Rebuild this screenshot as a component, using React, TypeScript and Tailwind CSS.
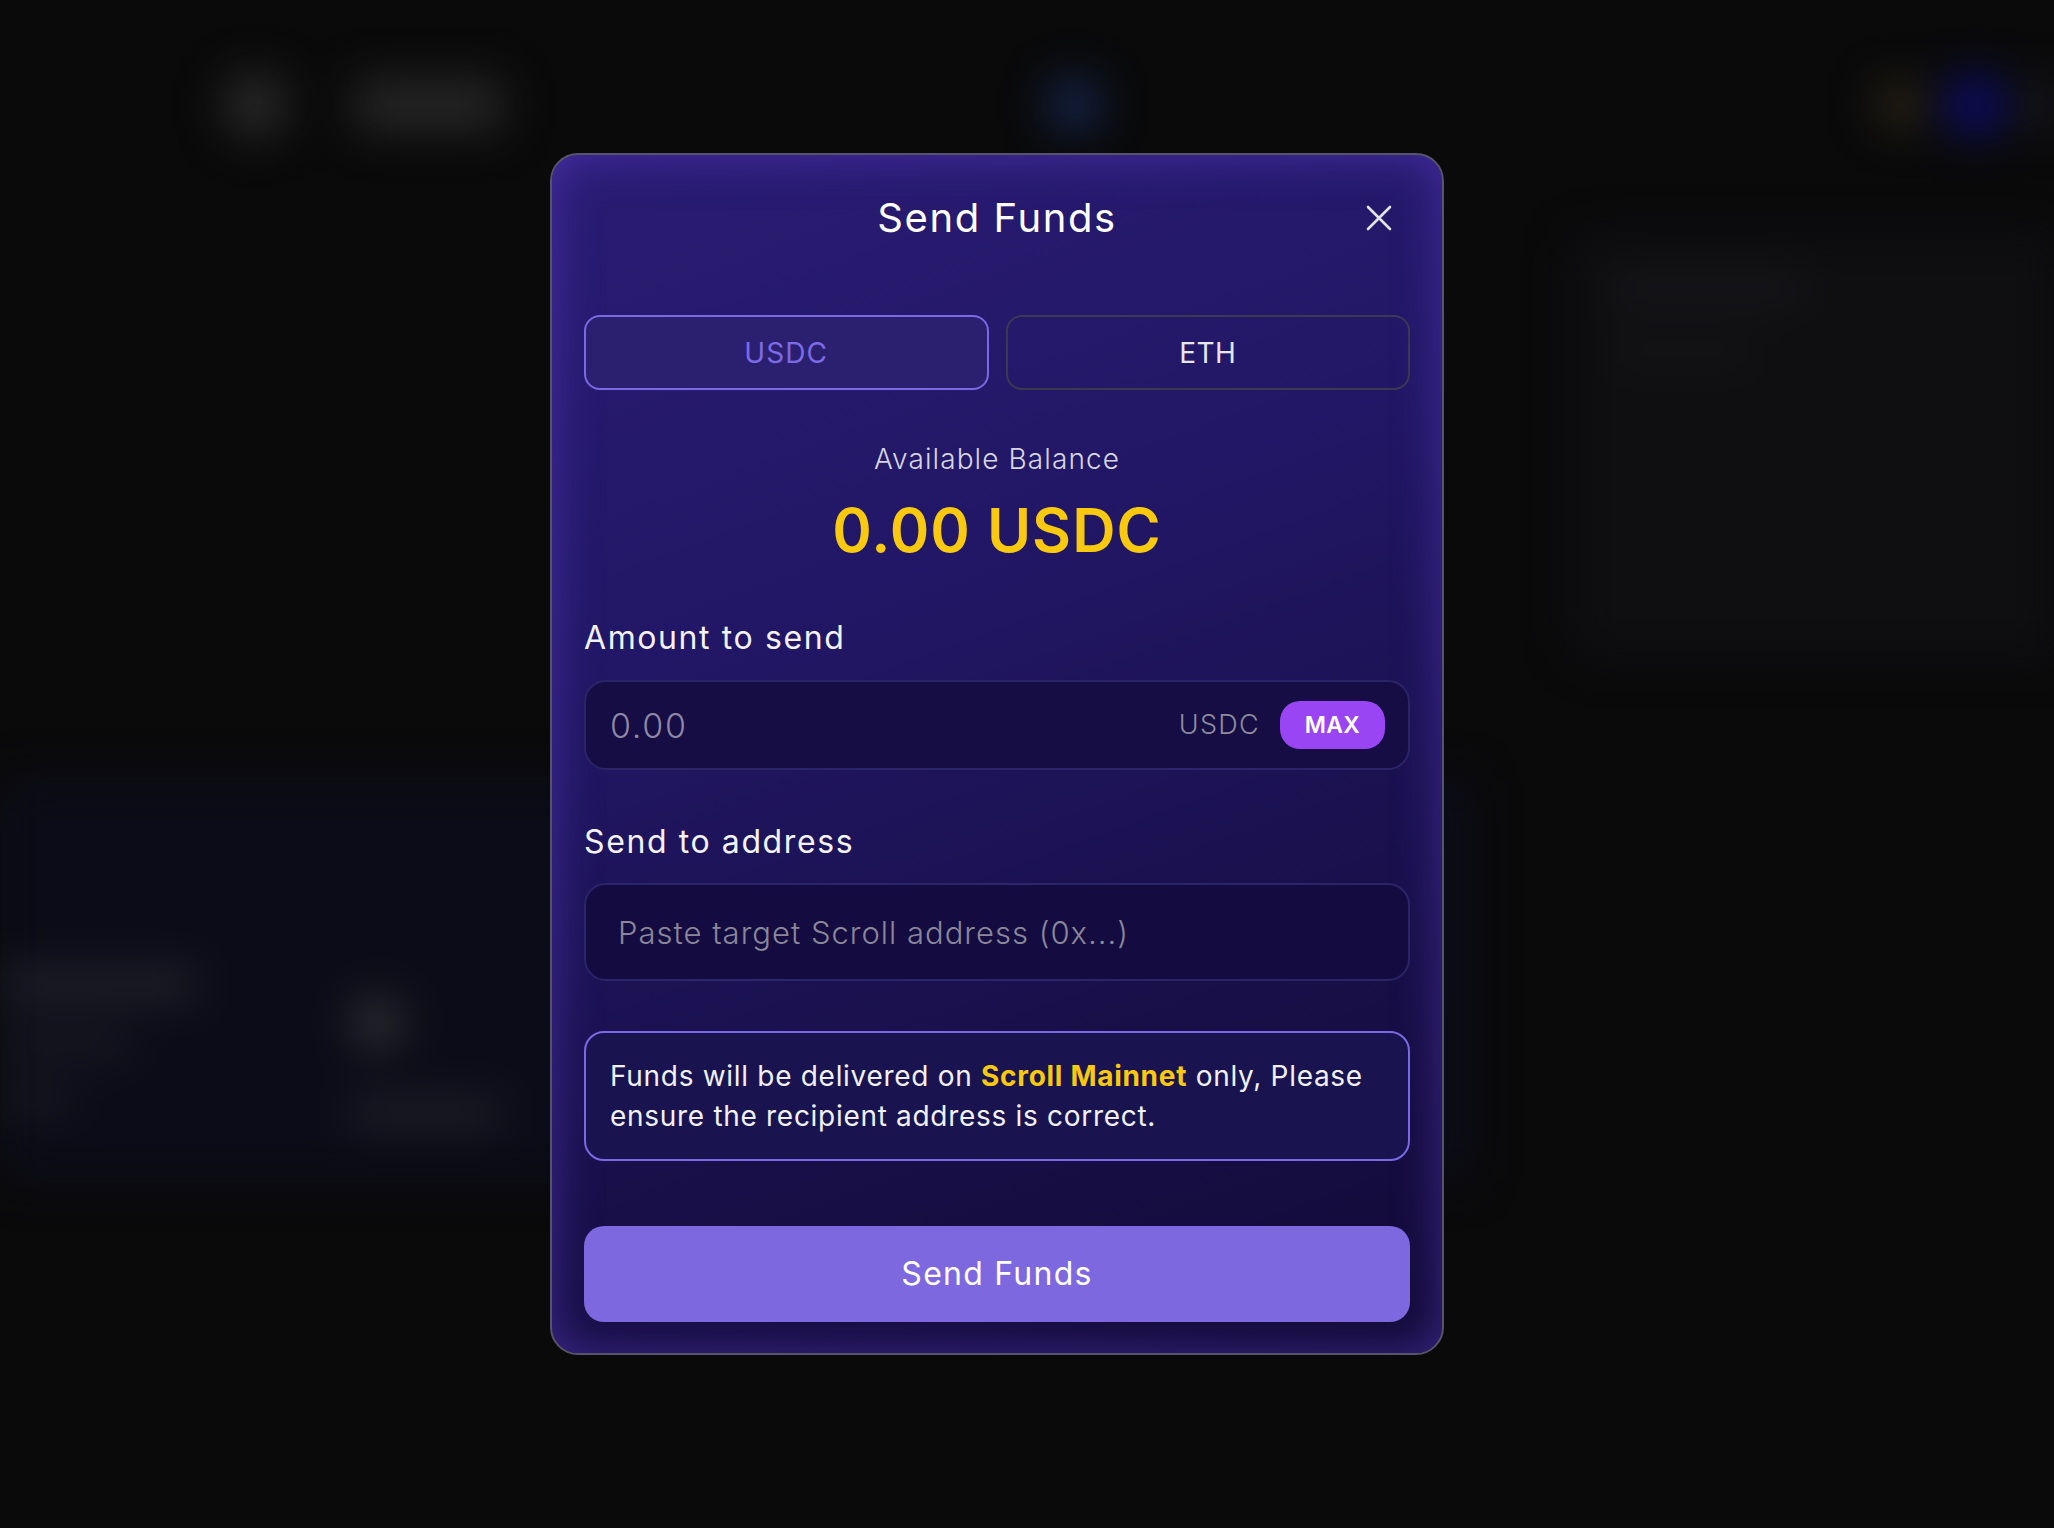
import { useState } from 'react';

// Blurred page behind the dialog
const Backdrop = () => (
  <div className="pointer-events-none h-full w-full blur-[22px]">
    <nav className="flex h-[210px] items-center pl-[222px] pr-0">
      <div className="h-[66px] w-[66px] rounded-full bg-[#282828]" />
      <div className="ml-[66px] h-[54px] w-[150px] rounded-xl bg-[#252525]" />
      <div className="ml-[543px] h-[54px] w-[54px] rounded-full bg-[#16264f]" />
      <div className="ml-auto h-[48px] w-[48px] rounded-full bg-[#2c2616]" />
      <div className="ml-[20px] h-[62px] w-[62px] rounded-full bg-[#0d0c66]" />
      <div className="ml-[18px] h-[54px] w-[30px] rounded-l-full bg-[#1c1c22]" />
    </nav>

    <div className="flex">
      <div className="flex-1 pt-[570px]">
        <div className="flex h-[400px] w-[1470px] gap-[40px] bg-[#0c0c18] pt-[190px]">
          <div className="flex w-[290px] flex-col gap-[34px]">
            <div className="h-[28px] w-[196px] rounded bg-[#24242e]" />
            <div className="h-[22px] w-[130px] rounded bg-[#1d1d27]" />
            <div className="h-[22px] w-[70px] rounded bg-[#1d1d27]" />
          </div>
          <div className="flex w-[260px] flex-col gap-[50px] pl-[20px] pt-[26px]">
            <div className="h-[54px] w-[54px] rounded-full bg-[#2c2c32]" />
            <div className="h-[26px] w-[150px] rounded bg-[#22222c]" />
          </div>
        </div>
      </div>
      <div className="w-[482px] pt-[26px]">
        <div className="flex h-[420px] flex-col gap-[40px] rounded-l-3xl bg-[#0f0f12] p-[40px]">
          <div className="h-[24px] w-[190px] rounded bg-[#19191d]" />
          <div className="h-[24px] w-[140px] rounded bg-[#151518]" />
        </div>
      </div>
    </div>
  </div>
);

const CloseIcon = () => (
  <svg width="26" height="26" viewBox="0 0 26 26" fill="none" aria-hidden="true">
    <path d="M2 2L24 24M24 2L2 24" stroke="#e2e2ea" strokeWidth="2.6" strokeLinecap="round" />
  </svg>
);

const TOKENS = ['USDC', 'ETH'];

export default function App() {
  const [token, setToken] = useState('USDC');

  return (
    <div className="relative h-[1528px] w-[2054px] overflow-hidden bg-[#0a0a0b] font-['Inter',sans-serif]">
      <Backdrop />

      {/* Dialog */}
      <div className="absolute inset-0 flex items-start justify-start pt-[153px] pl-[550px]">
        <div className="w-[894px] rounded-[28px] border-2 border-[#57536b] bg-[linear-gradient(160deg,#2a1c74_0%,#221766_35%,#180f48_72%,#120a36_100%)] px-8 pt-[39px] pb-[31px] shadow-[inset_0_0_46px_rgba(92,64,200,0.55)]">

          {/* Header */}
          <div className="grid grid-cols-[1fr_auto_1fr] items-center">
            <div />
            <h2 className="text-[40px] leading-[48px] font-normal tracking-[1.6px] text-white">Send Funds</h2>
            <button className="mr-[18px] justify-self-end">
              <CloseIcon />
            </button>
          </div>

          {/* Token tabs */}
          <div className="mt-[73px] grid grid-cols-2 gap-[17px]">
            {TOKENS.map((t) => (
              <button
                key={t}
                onClick={() => setToken(t)}
                className={
                  t === token
                    ? 'h-[75px] rounded-[16px] border-2 border-[#7a68e4] bg-[#2b1f70] text-[28px] tracking-[1.1px] text-[#7c6ae6]'
                    : 'h-[75px] rounded-[16px] border-2 border-[#3b3952] bg-transparent text-[28px] tracking-[0.5px] text-[#e6e6ee]'
                }
              >
                {t}
              </button>
            ))}
          </div>

          {/* Balance */}
          <p className="mt-[51px] text-center text-[28px] leading-[36px] font-light tracking-[1.1px] text-[#d6d6e0]">
            Available Balance
          </p>
          <p className="mt-[17px] text-center text-[60px] leading-[72px] font-semibold tracking-[1px] text-[#f8c90f]">
            0.00 {token}
          </p>

          {/* Amount */}
          <p className="mt-[52px] text-[32px] leading-[40px] font-normal tracking-[1.6px] text-[#f2f2f8]">Amount to send</p>
          <div className="mt-[22px] flex h-[90px] items-center rounded-[22px] border-2 border-[#2c2468] bg-[#150d43] pl-6 pr-[23px]">
            <input
              placeholder="0.00"
              className="min-w-0 flex-1 bg-transparent text-[34px] font-light tracking-[1.7px] text-white outline-none placeholder:text-[#8e88a6]"
            />
            <span className="text-[27px] font-light tracking-[1.3px] text-[#8e8c9e]">{token}</span>
            <span className="ml-[20px] flex h-[48px] w-[105px] items-center justify-center rounded-[20px] bg-[#9945f3] text-[23px] font-semibold tracking-[0.3px] text-white">
              MAX
            </span>
          </div>

          {/* Address */}
          <p className="mt-[52px] text-[32px] leading-[40px] font-normal tracking-[1.6px] text-[#f2f2f8]">Send to address</p>
          <input
            placeholder="Paste target Scroll address (0x...)"
            className="mt-[21px] h-[98px] w-full rounded-[22px] border-2 border-[#2c2468] bg-[#140c40] px-[32px] text-[31px] font-light tracking-[1px] text-white outline-none placeholder:text-[#8a8799]"
          />

          {/* Notice */}
          <p className="mt-[50px] rounded-[20px] border-2 border-[#7a68e4] bg-[#19144f] px-6 py-[23px] text-[28px] leading-[40px] tracking-[0.7px] text-[#f0f0f6]">
            Funds will be delivered on <b className="font-bold text-[#f8c90f]">Scroll Mainnet</b> only, Please ensure the
            recipient address is correct.
          </p>

          <button className="mt-[65px] h-[96px] w-full rounded-[20px] bg-[#7e68df] text-[32px] font-normal tracking-[1.25px] text-white">
            Send Funds
          </button>
        </div>
      </div>
    </div>
  );
}
